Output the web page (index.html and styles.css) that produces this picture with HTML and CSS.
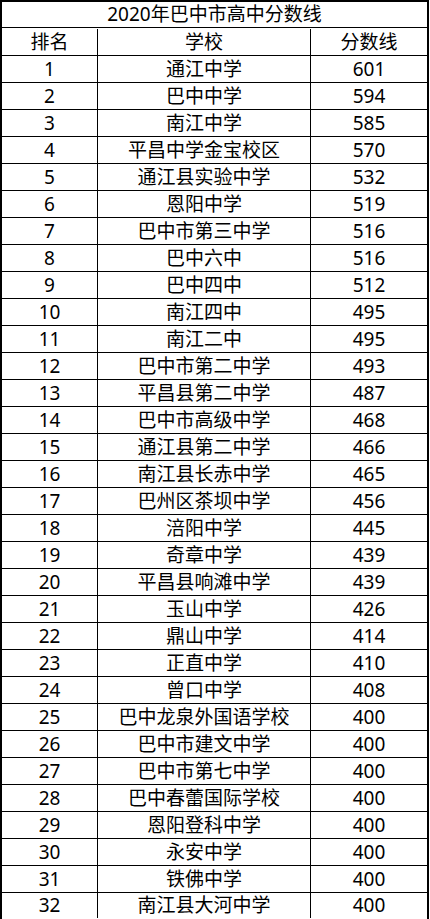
FILE: index.html
```html
<!DOCTYPE html>
<html lang="zh-CN">
<head>
<meta charset="utf-8">
<title>2020年巴中市高中分数线</title>
<link rel="stylesheet" href="styles.css">
</head>
<body>
<div class="table">
  <div class="cell title">2020年巴中市高中分数线</div>
  <div class="cell">排名</div><div class="cell">学校</div><div class="cell last">分数线</div>
  <div class="cell">1</div><div class="cell">通江中学</div><div class="cell last">601</div>
  <div class="cell">2</div><div class="cell">巴中中学</div><div class="cell last">594</div>
  <div class="cell">3</div><div class="cell">南江中学</div><div class="cell last">585</div>
  <div class="cell">4</div><div class="cell">平昌中学金宝校区</div><div class="cell last">570</div>
  <div class="cell">5</div><div class="cell">通江县实验中学</div><div class="cell last">532</div>
  <div class="cell">6</div><div class="cell">恩阳中学</div><div class="cell last">519</div>
  <div class="cell">7</div><div class="cell">巴中市第三中学</div><div class="cell last">516</div>
  <div class="cell">8</div><div class="cell">巴中六中</div><div class="cell last">516</div>
  <div class="cell">9</div><div class="cell">巴中四中</div><div class="cell last">512</div>
  <div class="cell">10</div><div class="cell">南江四中</div><div class="cell last">495</div>
  <div class="cell">11</div><div class="cell">南江二中</div><div class="cell last">495</div>
  <div class="cell">12</div><div class="cell">巴中市第二中学</div><div class="cell last">493</div>
  <div class="cell">13</div><div class="cell">平昌县第二中学</div><div class="cell last">487</div>
  <div class="cell">14</div><div class="cell">巴中市高级中学</div><div class="cell last">468</div>
  <div class="cell">15</div><div class="cell">通江县第二中学</div><div class="cell last">466</div>
  <div class="cell">16</div><div class="cell">南江县长赤中学</div><div class="cell last">465</div>
  <div class="cell">17</div><div class="cell">巴州区茶坝中学</div><div class="cell last">456</div>
  <div class="cell">18</div><div class="cell">涪阳中学</div><div class="cell last">445</div>
  <div class="cell">19</div><div class="cell">奇章中学</div><div class="cell last">439</div>
  <div class="cell">20</div><div class="cell">平昌县响滩中学</div><div class="cell last">439</div>
  <div class="cell">21</div><div class="cell">玉山中学</div><div class="cell last">426</div>
  <div class="cell">22</div><div class="cell">鼎山中学</div><div class="cell last">414</div>
  <div class="cell">23</div><div class="cell">正直中学</div><div class="cell last">410</div>
  <div class="cell">24</div><div class="cell">曾口中学</div><div class="cell last">408</div>
  <div class="cell">25</div><div class="cell">巴中龙泉外国语学校</div><div class="cell last">400</div>
  <div class="cell">26</div><div class="cell">巴中市建文中学</div><div class="cell last">400</div>
  <div class="cell">27</div><div class="cell">巴中市第七中学</div><div class="cell last">400</div>
  <div class="cell">28</div><div class="cell">巴中春蕾国际学校</div><div class="cell last">400</div>
  <div class="cell">29</div><div class="cell">恩阳登科中学</div><div class="cell last">400</div>
  <div class="cell">30</div><div class="cell">永安中学</div><div class="cell last">400</div>
  <div class="cell">31</div><div class="cell">铁佛中学</div><div class="cell last">400</div>
  <div class="cell bottom">32</div><div class="cell bottom">南江县大河中学</div><div class="cell last bottom">400</div>
</div>
</body>
</html>
```
FILE: styles.css
```css
html, body {
  margin: 0;
  padding: 0;
  background: #ffffff;
}

.table {
  display: grid;
  grid-template-columns: 96px 213px 116px;
  grid-auto-rows: 27px;
  width: 425px;
  border: 2px solid #000;
  font-family: "Noto Sans", "Noto Sans CJK SC", sans-serif;
  font-size: 19px;
  color: #000;
}

.cell {
  box-sizing: border-box;
  display: flex;
  align-items: center;
  justify-content: center;
  border-right: 1px solid #000;
  border-bottom: 1px solid #000;
  white-space: nowrap;
  line-height: 1;
}

.title {
  grid-column: 1 / span 3;
  height: 26px;
  border-right: none;
}

.last {
  border-right: none;
}

.bottom {
  border-bottom: none;
  height: 25px;
}
```
